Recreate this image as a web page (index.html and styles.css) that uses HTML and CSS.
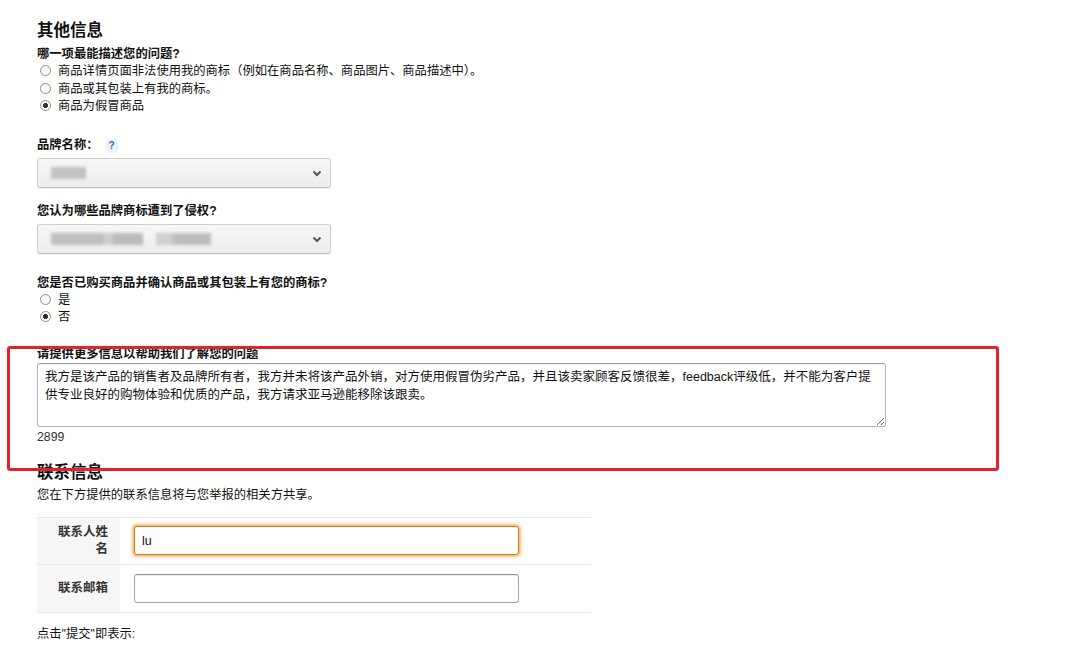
FILE: index.html
```html
<!DOCTYPE html>
<html lang="zh-CN">

<head>
    <meta charset="UTF-8">
    <meta name="viewport" content="width=device-width, initial-scale=1.0">
    <link rel="stylesheet" href="styles.css">
</head>

<body>
    <div class="page">
        <h2 class="section-title">其他信息</h2>

        <div class="field first">
            <div class="label flush">哪一项最能描述您的问题?</div>
            <label class="radio"><input type="radio" name="issue">商品详情页面非法使用我的商标（例如在商品名称、商品图片、商品描述中）。</label>
            <label class="radio"><input type="radio" name="issue">商品或其包装上有我的商标。</label>
            <label class="radio"><input type="radio" name="issue" checked>商品为假冒商品</label>
        </div>

        <div class="field">
            <div class="label">品牌名称：<span class="help">?</span></div>
            <div class="select">
                <span class="redact r1"></span>
                <svg class="chevron" width="10" height="7" viewBox="0 0 10 7">
                    <path d="M1.5 1.5 L5 5 L8.5 1.5" fill="none" stroke="#555" stroke-width="2"/>
                </svg>
            </div>
        </div>

        <div class="field near">
            <div class="label">您认为哪些品牌商标遭到了侵权?</div>
            <div class="select">
                <span class="redact r2"></span>
                <span class="redact r4"></span>
                <svg class="chevron" width="10" height="7" viewBox="0 0 10 7">
                    <path d="M1.5 1.5 L5 5 L8.5 1.5" fill="none" stroke="#555" stroke-width="2"/>
                </svg>
            </div>
        </div>

        <div class="field">
            <div class="label flush">您是否已购买商品并确认商品或其包装上有您的商标?</div>
            <label class="radio"><input type="radio" name="bought">是</label>
            <label class="radio"><input type="radio" name="bought" checked>否</label>
        </div>

        <div class="field more">
            <div class="label flush">请提供更多信息以帮助我们了解您的问题</div>
            <textarea class="details">我方是该产品的销售者及品牌所有者，我方并未将该产品外销，对方使用假冒伪劣产品，并且该卖家顾客反馈很差，feedback评级低，并不能为客户提供专业良好的购物体验和优质的产品，我方请求亚马逊能移除该跟卖。</textarea>
            <div class="counter">2899</div>
        </div>

        <h2 class="section-title contact-title">联系信息</h2>
        <p class="note">您在下方提供的联系信息将与您举报的相关方共享。</p>

        <table class="contact">
            <tr>
                <th>联系人姓名</th>
                <td><input class="text-input focused" type="text" value="lu"></td>
            </tr>
            <tr>
                <th>联系邮箱</th>
                <td><input class="text-input" type="text" value=""></td>
            </tr>
        </table>

        <p class="note last">点击"提交"即表示:</p>
    </div>

    <div class="highlight"></div>
</body>

</html>
```

FILE: styles.css
```css
body {
    margin: 0;
    background: #fff;
    color: #111;
    font-family: "Liberation Sans", "Noto Sans CJK SC", sans-serif;
    font-size: 12.3px;
}

.page {
    padding: 20px 0 0 37px;
}

.section-title {
    margin: 0;
    font-size: 16.5px;
    line-height: 20px;
    font-weight: bold;
}

.contact-title {
    margin-top: 16px;
}

.field {
    margin-top: 20px;
}

.field.first {
    margin-top: 5px;
}

.field.near {
    margin-top: 14px;
}

.field.more {
    margin-top: 18px;
}

.label {
    font-weight: bold;
    line-height: 18px;
    margin-bottom: 4px;
}

.label.flush {
    margin-bottom: 0;
}

.radio {
    display: block;
    line-height: 17.5px;
}

.radio input {
    appearance: none;
    -webkit-appearance: none;
    width: 11px;
    height: 11px;
    margin: 0 7px 0 3px;
    border: 1px solid #8d8d8d;
    border-radius: 50%;
    background: linear-gradient(#f4f4f4, #fff);
    vertical-align: -1px;
    box-sizing: border-box;
}

.radio input:checked {
    background: radial-gradient(circle, #333 0, #333 2.3px, #fff 2.8px);
}

.help {
    display: inline-block;
    width: 14px;
    height: 14px;
    margin-left: 6px;
    border-radius: 50%;
    background: #eef2f7;
    color: #2f6fb8;
    font-size: 10px;
    line-height: 14px;
    text-align: center;
    vertical-align: 0;
}

.select {
    position: relative;
    display: flex;
    align-items: center;
    gap: 13px;
    box-sizing: border-box;
    width: 294px;
    height: 30px;
    padding-left: 13px;
    border: 1px solid #cfcfcf;
    border-bottom-color: #bdbdbd;
    border-radius: 3px;
    background: linear-gradient(#f7f7f7, #ececec);
    box-shadow: 0 1px 0 rgba(0, 0, 0, 0.05);
}

.redact {
    display: block;
    height: 12px;
    background: #c2c2c2;
    filter: blur(1.5px);
}

.r1 {
    width: 35px;
}

.r2 {
    width: 92px;
    background: linear-gradient(to right, #c0c0c0 0, #c0c0c0 55%, #d2d2d2 62%, #bcbcbc 70%, #bcbcbc 100%);
}

.r4 {
    width: 55px;
    background: linear-gradient(to right, #d0d0d0 0, #d0d0d0 25%, #bdbdbd 35%, #bdbdbd 100%);
}

.chevron {
    position: absolute;
    right: 8px;
    top: 11px;
}

.details {
    display: block;
    box-sizing: border-box;
    width: 849px;
    height: 64px;
    margin: 0;
    padding: 4px 11px 4px 7px;
    border: 1px solid #b5b5b5;
    border-top-color: #a0a0a0;
    border-radius: 3px;
    color: #111;
    font-family: "Liberation Sans", "Noto Sans CJK SC", sans-serif;
    font-size: 12.5px;
    line-height: 18px;
    resize: vertical;
    box-shadow: inset 0 1px 0 rgba(0, 0, 0, 0.05);
}

.counter {
    margin-top: 1px;
    line-height: 18px;
    color: #333;
}

.note {
    margin: 4px 0 0;
    line-height: 18px;
}

.note.last {
    margin-top: 12px;
}

.contact {
    margin-top: 13px;
    width: 554px;
    border-collapse: collapse;
    table-layout: fixed;
}

.contact tr {
    border-top: 1px solid #e7e7e7;
    border-bottom: 1px solid #e7e7e7;
}

.contact tr:first-child {
    height: 47px;
}

.contact tr:last-child {
    height: 48px;
}

.contact th {
    width: 57px;
    padding: 0 12px 0 14px;
    background: #f6f6f6;
    text-align: right;
    font-weight: bold;
    color: #333;
    font-size: 12.5px;
    line-height: 17px;
}

.contact td {
    padding: 0 0 0 14px;
}

.text-input {
    display: block;
    box-sizing: border-box;
    width: 385px;
    height: 29px;
    margin: 0;
    padding: 0 7px;
    border: 1px solid #a6a6a6;
    border-top-color: #949494;
    border-radius: 3px;
    font-family: "Liberation Sans", "Noto Sans CJK SC", sans-serif;
    font-size: 12.5px;
    color: #111;
    box-shadow: inset 0 1px 0 rgba(0, 0, 0, 0.07);
    outline: none;
}

.text-input.focused {
    border-color: #e77600;
    box-shadow: 0 0 3px 2px rgba(228, 121, 17, 0.5);
}

.highlight {
    position: absolute;
    left: 7px;
    top: 346px;
    width: 992px;
    height: 125px;
    box-sizing: border-box;
    border: 3px solid #e3232a;
    border-radius: 3px;
    pointer-events: none;
}
```
